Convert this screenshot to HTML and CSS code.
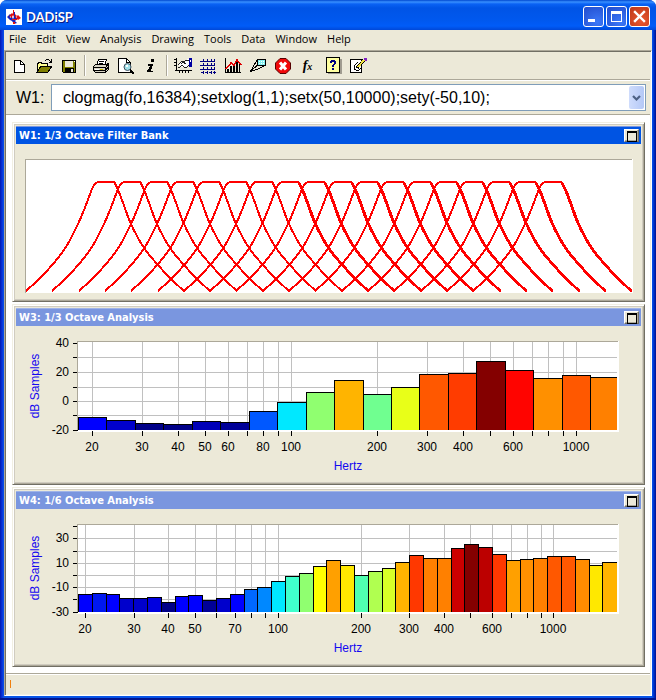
FILE: index.html
```html
<!DOCTYPE html>
<html lang="en">
<head>
<meta charset="utf-8">
<title>DADiSP</title>
<link rel="stylesheet" href="styles.css">
</head>
<body>
<div class="frame">
  <header class="titlebar">
    <svg class="logo" viewBox="0 0 16 16" aria-hidden="true">
      <rect width="16" height="16" fill="#fff"/>
      <path d="M1 8l3-3 2 2 2-2 4 4-3 3 2 2-3 1-2-3-2-1z" fill="#1420c0"/>
      <path d="M7 1h1v3l3 3 1-1 3 3-3 2-4-4-2 2-3-2 3-3 1 1z" fill="#e01010"/>
      <path d="M7 6l1 2-1 2-1-2zM10 7l1 1-1 1zM4 7l1 1-1 1z" fill="#fff"/>
      <path d="M8 3h1v10H8z" fill="#1420c0"/>
      <path d="M6 10h5v1H6zM7 13h2v2H7z" fill="#e01010"/>
    </svg>
    <h1 class="app-name">DADiSP</h1>
    <button class="win-btn" aria-label="Minimize"><svg viewBox="0 0 19 19"><path d="M4 12h7v3H4z" fill="#fff"/></svg></button>
    <button class="win-btn" aria-label="Maximize"><svg viewBox="0 0 19 19"><path d="M4 4h11v11H4zM5 7v7h9V7z" fill="#fff" fill-rule="evenodd"/></svg></button>
    <button class="win-btn win-close" aria-label="Close"><svg viewBox="0 0 19 19"><path d="M5 5l9 9M14 5l-9 9" stroke="#fff" stroke-width="2.4" stroke-linecap="square"/></svg></button>
  </header>

  <nav class="menu">
    <button>File</button><button>Edit</button><button>View</button><button>Analysis</button><button>Drawing</button><button>Tools</button><button>Data</button><button>Window</button><button>Help</button>
  </nav>

  <div class="client">
    <div class="toolbar">
      <button aria-label="New"><svg viewBox="0 0 18 18"><path d="M4.500 3.500h6l4 4v8h-10z" fill="#fff" stroke="#000"/><path d="M10.500 3.500v4h4" fill="none" stroke="#000"/></svg></button>
      <button aria-label="Open"><svg viewBox="0 0 18 18"><path d="M2 15V6h1V5h3v1h6v3" fill="#ffff90" stroke="#000"/><path d="M2 15l4-6h11l-4 6z" fill="#808000" stroke="#000"/><path d="M10 3.500h1M11 2.500h3M14 3.500h1M15 4.500h2M14 5.500h3M16.500 2v4" stroke="#000" fill="none"/></svg></button>
      <button aria-label="Save"><svg viewBox="0 0 18 18"><path d="M2.500 3.500h13v12H3.500l-1-1z" fill="#808000" stroke="#000"/><path d="M5 4h8v6H5z" fill="#ece9d8"/><path d="M5 11h9v5H5z"/><path d="M11 12h2v3h-2z" fill="#ece9d8"/><path d="M14 4h1v1h-1z" fill="#fff"/></svg></button>
      <span class="sep"></span>
      <button aria-label="Print"><svg viewBox="0 0 18 18"><path d="M6.500 2.500h8l-2 6h-8z" fill="#fff" stroke="#000"/><path d="M7 4.500h5M7 6.500h4" stroke="#000"/><path d="M1.500 9.500l2-2h11l2-1v6l-3 3h-10l-2-2z" fill="#d8d4c4" stroke="#000"/><path d="M2 10.500h11M2 13.500h11M13.500 10v5M14 9.500l2-2M14 12.500l2-2" stroke="#000"/><path d="M8 12h3" stroke="#d0c000"/><path d="M3 12h4" stroke="#fff"/></svg></button>
      <button aria-label="Print preview"><svg viewBox="0 0 18 18"><path d="M1.500 1.500h8l4 4v10h-12z" fill="#fff" stroke="#000"/><path d="M9.500 1.500v4h4" fill="none" stroke="#000"/><circle cx="10.500" cy="10" r="3.500" fill="#a0e0e8" stroke="#405060" shape-rendering="auto"/><path d="M9 8h2v2H9z" fill="#fff"/><path d="M13 13l4 3.500" stroke="#000" stroke-width="2"/></svg></button>
      <button aria-label="Information"><svg viewBox="0 0 18 18"><path d="M9 2h3v3H9zM6 7h5v1l-2 6h2v1H5v-2h1l2-4H6z"/></svg></button>
      <span class="sep"></span>
      <button aria-label="Plot"><svg viewBox="0 0 18 18"><path d="M2.500 1v12M1 13.500h17M0 2.500h3M0 5.500h3M0 8.500h3M5.500 13v3M8.500 13v3M11.500 13v3M14.500 13v3" stroke="#000"/><path d="M5 7l3-3h3l2-2h2v6l-3 2H6z" fill="#fff"/><path d="M4 8l4-4h3l2-1h2M4 10h2l2-2 2 2h3l2-2M7 7l2-2 3 2" fill="none" stroke="#222"/><path d="M15 1h3v9h-3z" fill="#0000a0"/><path d="M16 3h1v2h-1z" fill="#fff"/></svg></button>
      <button aria-label="Grid"><svg viewBox="0 0 18 18"><path d="M4.500 2v15M8.500 2v15M12.500 2v15M1 4.500h16M1 8.500h16M1 12.500h16M15.500 2v15M2 15.500h15" stroke="#000080" stroke-dasharray="3 1"/></svg></button>
      <button aria-label="Chart"><svg viewBox="0 0 18 18"><path d="M1.500 1v14.500H17" fill="none" stroke="#000"/><path d="M3 12h2v3H3zM6 9h2v6H6zM9 8h2v7H9zM12 5h2v10h-2zM15 7h1v8h-1z"/><path d="M2 12l5-6 3 2 3-5 4 5" fill="none" stroke="#e00000" stroke-width="1.500"/></svg></button>
      <button aria-label="Annotate"><svg viewBox="0 0 18 18"><path d="M8.500 2.500h8v6h-8z" fill="#80f0f0" stroke="#000"/><path d="M10 4h1M12 4h1M14 4h1M10 6h1M12 6h1M14 6h1" stroke="#fff"/><path d="M8 3L1.500 14.500L8 8.500M1.500 14.500L9 12L15 9" stroke="#000" fill="none"/></svg></button>
      <button aria-label="Stop"><svg viewBox="0 0 18 18"><path d="M6 1.500h6L16.500 6v6L12 16.500H6L1.500 12V6z" fill="#f00808" stroke="#500" shape-rendering="auto"/><path d="M6 5.500l6 7M12 5.500l-6 7" stroke="#fff" stroke-width="3" shape-rendering="auto"/></svg></button>
      <button aria-label="Function" class="fx"><i>f</i><small>x</small></button>
      <button aria-label="Help"><svg viewBox="0 0 18 18"><path d="M4 2h14v15H4z" fill="#a09c90"/><path d="M2.500 .500h13v15h-13z" fill="#ffffa0" stroke="#000"/><path d="M6 6V4h1V3h4v1h1v3h-1v1h-1v2H8V8h1V7h1V5H8v1zM8 11h2v2H8z" fill="#000080"/></svg></button>
      <button aria-label="Edit notes"><svg viewBox="0 0 18 18"><path d="M1.500 2.500h11v13h-11z" fill="#fff" stroke="#000"/><path d="M9 5L5 9v3l2 1h3l2-2" fill="none" stroke="#000"/><path d="M8 11l7-8" stroke="#000" stroke-width="3"/><path d="M9 10l6-7" stroke="#f0e040" stroke-width="2"/><path d="M15 1h3v3h-2z" fill="#8020c0"/></svg></button>
    </div>

    <div class="command">
      <label for="formula">W1:</label>
      <div class="combo">
        <input id="formula" type="text" value="clogmag(fo,16384);setxlog(1,1);setx(50,10000);sety(-50,10);">
        <button aria-label="Show history"><svg viewBox="0 0 15 23"><path d="M4 10l3.500 3.500L11 10" fill="none" stroke="#4d6185" stroke-width="2.200"/></svg></button>
      </div>
    </div>

    <main class="workspace">
      <section class="sheet active">
        <header class="caption"><h2>W1: 1/3 Octave Filter Bank</h2><button aria-label="Maximize W1"></button></header>
        <svg class="chart" id="filter-bank" viewBox="0 0 625 154" role="img" aria-label="Filter bank"></svg>
      </section>
      <section class="sheet">
        <header class="caption"><h2>W3: 1/3 Octave Analysis</h2><button aria-label="Maximize W3"></button></header>
        <svg class="chart" id="third-octave" viewBox="0 0 625 155" role="img" aria-label="Third octave analysis"></svg>
      </section>
      <section class="sheet">
        <header class="caption"><h2>W4: 1/6 Octave Analysis</h2><button aria-label="Maximize W4"></button></header>
        <svg class="chart" id="sixth-octave" viewBox="0 0 625 154" role="img" aria-label="Sixth octave analysis"></svg>
      </section>
    </main>

    <footer class="status"><span class="caret"></span></footer>
  </div>
</div>
<script src="charts.js"></script>
</body>
</html>
```
FILE: styles.css
```css
* { box-sizing: border-box; }

body {
  margin: 0;
  background: #fff;
  font-family: "Open Sans", "Liberation Sans", sans-serif;
  font-size: 11px;
  color: #000;
}

button {
  margin: 0;
  padding: 0;
  border: 0;
  background: none;
  font: inherit;
  color: inherit;
}

.frame {
  display: flex;
  flex-direction: column;
  min-height: 100vh;
  padding: 0 4px 4px;
  border-radius: 7px 7px 0 0;
  background: linear-gradient(90deg, #0019b0 0, #0831d9 2px, #0855e8 4px, #0855e8 calc(100% - 4px), #0040e0 calc(100% - 3px), #001090 100%);
  box-shadow: inset 0 -2px #001590;
  overflow: hidden;
}

.titlebar {
  display: flex;
  align-items: center;
  gap: 2px;
  height: 30px;
  margin: 0 -4px;
  padding: 3px 6px 0 6px;
  background: linear-gradient(#0048d0 0, #3890ff 2px, #0a62f4 4px, #0054e6 8px, #0058ee 20px, #005cf8 26px, #0048d8 30px);
}

.logo { width: 16px; height: 16px; }

.app-name {
  flex: 1;
  margin: 0 0 0 2px;
  font-family: Lato, sans-serif;
  font-size: 13px;
  line-height: 16px;
  color: #fff;
  text-shadow: 1px 1px #0a1883;
}

.win-btn {
  width: 21px;
  height: 21px;
  border: 1px solid #fff;
  border-radius: 3px;
  background: radial-gradient(circle at 70% 80%, #3c78f8, #2450d0 90%);
}
.win-btn svg { display: block; width: 19px; height: 19px; }
.win-close { background: radial-gradient(circle at 60% 70%, #e85830, #c03818 95%); }

.menu {
  display: flex;
  height: 20px;
  padding: 0 0 2px;
  background: #ece9d8;
  line-height: 18px;
}
.menu button { padding: 0 5px; }

.client {
  flex: 1;
  display: flex;
  flex-direction: column;
  border: 1px solid;
  border-color: #aca899 #fff #fff #aca899;
  box-shadow: inset 1px 1px #716f64, inset -1px -1px #f1efe2;
  padding: 1px;
  background: #ece9d8;
}

.toolbar {
  display: flex;
  align-items: center;
  height: 28px;
  border-bottom: 1px solid #aca899;
}
.toolbar button {
  display: flex;
  align-items: center;
  justify-content: center;
  width: 25px;
  height: 24px;
}
.toolbar svg { width: 18px; height: 18px; shape-rendering: crispEdges; }
.sep {
  width: 2px;
  height: 21px;
  margin: 0 2px 0 3px;
  border-left: 1px solid #aca899;
  border-right: 1px solid #fff;
}
.toolbar .fx {
  font-family: "Liberation Serif", serif;
  font-weight: bold;
  font-size: 14px;
  line-height: 16px;
}
.fx small { font-size: 10px; font-style: italic; padding-top: 3px; }

.command {
  display: flex;
  align-items: center;
  gap: 5px;
  height: 35px;
  padding: 0 4px 0 10px;
  border-top: 1px solid #fff;
  border-bottom: 1px solid #aca899;
  font-family: "Liberation Sans", sans-serif;
  font-size: 16px;
}
.command label { width: 30px; }
.combo {
  flex: 1;
  display: flex;
  min-width: 0;
  height: 27px;
  padding: 1px;
  border: 1px solid #7f9db9;
  background: #fff;
}
.combo input {
  flex: 1;
  min-width: 0;
  padding: 0 10px;
  border: 0;
  outline: 0;
  background: none;
  font: inherit;
}
.combo button {
  width: 15px;
  height: 23px;
  border-radius: 2px;
  background: linear-gradient(90deg, #cfdcfc, #b4c8f6);
}
.combo svg { display: block; }

.workspace {
  flex: 1;
  display: flex;
  flex-direction: column;
  gap: 2px;
  padding: 7px 5px 6px 6px;
  background: #fff;
}

.sheet {
  padding: 3px;
  border: 1px solid;
  border-color: #f1efe2 #716f64 #716f64 #f1efe2;
  background: #ece9d8;
  box-shadow: inset 1px 1px #fff, inset -1px -1px #aca899, inset 2px 2px #d0ccc0, inset -2px -2px #d0ccc0;
}
.caption {
  display: flex;
  align-items: flex-start;
  justify-content: space-between;
  height: 18px;
  padding: 2px 2px 0 3px;
  background: #7a96df;
  border-top: 1px solid #a0b4e8;
  color: #fff;
}
.active .caption { background: #0054e3; border-color: #7a96df; }
.caption h2 {
  margin: 0;
  font-family: "DejaVu Sans Condensed", "Open Sans", sans-serif;
  font-size: 11px;
  line-height: 14px;
  font-weight: bold;
}
.caption button {
  display: flex;
  align-items: flex-start;
  width: 15px;
  height: 13px;
  border: 1px solid;
  border-color: #fff #716f64 #716f64 #fff;
  background: #ece9d8;
  box-shadow: inset -1px -1px #aca899;
}
.caption button::before {
  content: "";
  width: 8px;
  height: 8px;
  margin: 1px 0 0 2px;
  border: 1px solid #000;
  border-top-width: 2px;
}

.chart {
  display: block;
  width: 100%;
  height: auto;
  font-family: "Liberation Sans", sans-serif;
  font-size: 12px;
}
.chart .plot { fill: #fff; }
.chart .edge { stroke: #aca899; fill: none; }
.chart .grid { stroke: #c0c0c0; fill: none; }
.chart .tick { stroke: #000; fill: none; }
.chart .bar { stroke: #000; }
.chart .response { stroke: #f00; stroke-width: 2; fill: none; }
.chart .axis { fill: #1408f0; }
.chart .plot, .chart .edge, .chart .grid, .chart .tick, .chart .bar, .chart .response { shape-rendering: crispEdges; }

.status {
  display: flex;
  align-items: center;
  height: 21px;
  padding-left: 4px;
  border-top: 1px solid #aca899;
  box-shadow: inset 0 1px #fff;
}
.caret { width: 1px; height: 8px; background: #f08010; }
```
FILE: charts.js
```js
const NS = "http://www.w3.org/2000/svg";

function add(svg, name, attrs, text) {
  const el = document.createElementNS(NS, name);
  for (const key in attrs) el.setAttribute(key, attrs[key]);
  if (text !== undefined) el.textContent = text;
  svg.appendChild(el);
}

function line(svg, cls, x1, y1, x2, y2) {
  add(svg, "path", { class: cls, d: `M${x1} ${y1}L${x2} ${y2}` });
}

// Catmull-Rom spline through the points, written as cubic segments.
function spline(p) {
  let d = `M${p[0]}`;
  for (let i = 0; i < p.length - 1; i++) {
    const a = p[i - 1] || p[i], b = p[i], c = p[i + 1], e = p[i + 2] || c;
    d += `C${b[0] + (c[0] - a[0]) / 6},${b[1] + (c[1] - a[1]) / 6} ` +
      `${c[0] - (e[0] - b[0]) / 6},${c[1] - (e[1] - b[1]) / 6} ${c[0]},${c[1]}`;
  }
  return d;
}

function drawFilterBank() {
  const svg = document.getElementById("filter-bank");
  add(svg, "rect", { class: "plot", x: 9, y: 15, width: 608, height: 134 });
  add(svg, "path", { class: "edge", d: "M9.5 149V15.5H616" });
  const shape = [[10, 147], [23, 135], [37, 120], [50, 103], [62, 80], [70, 61], [76, 45], [80, 39], [84, 38],
    [95, 38], [98, 38], [102, 46], [106, 56], [115, 80], [128, 104], [142, 121], [155, 135], [168, 147]];
  for (let i = 0; i < 18; i++) {
    const shift = Math.round(i * 26.3);
    add(svg, "path", { class: "response", d: spline(shape.map(([x, y]) => [x + shift, y])) });
    // The falling edges of the upper bands are drawn one pixel heavier.
    if (i > 6) add(svg, "path", { class: "response", d: spline(shape.slice(10).map(([x, y]) => [x + shift + 1, y])) });
  }
}

const FREQUENCIES = [20, 30, 40, 50, 60, 70, 80, 90, 100, 200, 300, 400, 500, 600, 700, 800, 900, 1000];

function drawSpectrum(o) {
  const svg = document.getElementById(o.id);
  add(svg, "rect", { class: "plot", x: 61, y: o.top, width: 542, height: o.base + 2 - o.top });
  const at = f => Math.round(o.x20 + o.decade * Math.log10(f / 20));
  o.rows.forEach(([y, label, grid]) => {
    if (grid) line(svg, "grid", 62, y + 0.5, 601, y + 0.5);
    line(svg, "tick", 57, y + 0.5, 62, y + 0.5);
    if (label) add(svg, "text", { x: 53, y: y + 4, "text-anchor": "end" }, label);
  });
  FREQUENCIES.forEach(f => {
    const x = at(f);
    line(svg, "grid", x + 0.5, o.top, x + 0.5, o.base);
    line(svg, "tick", x + 0.5, o.base + 1, x + 0.5, o.base + 6);
    if (o.labels.includes(f)) add(svg, "text", { x, y: o.base + 21, "text-anchor": "middle" }, f);
  });
  add(svg, "path", { class: "edge", d: `M61.5 ${o.base}V${o.top + 0.5}H602` });
  o.bars.forEach(([y, fill], i) => {
    const x = Math.round(62 + i * o.step);
    const last = i === o.bars.length - 1;
    const end = last ? 601 : Math.round(62 + (i + 1) * o.step);
    add(svg, "rect", { x, y, width: end - x, height: o.base - y, fill });
    const d = `M${x + 0.5} ${o.base}V${y + 0.5}H${last ? end : end + 0.5}` + (last ? "" : `V${o.base}`);
    add(svg, "path", { class: "bar", fill: "none", d });
  });
  add(svg, "text", { class: "axis", x: 332, y: o.base + 40, "text-anchor": "middle" }, "Hertz");
  add(svg, "text", { class: "axis", "text-anchor": "middle", transform: `translate(23 ${o.middle}) rotate(-90)` }, "dB Samples");
}

drawFilterBank();

drawSpectrum({
  id: "third-octave", top: 15, base: 104, middle: 60, x20: 76, decade: 284.8, step: 28.45,
  rows: [[17, "40"], [31, "", 1], [46, "20", 1], [61, "", 1], [75, "0", 1], [89, "", 1], [104, "-20"]],
  labels: [20, 30, 40, 50, 60, 80, 100, 200, 300, 400, 600, 1000],
  bars: [[91, "#0000ff"], [94, "#0000cc"], [97, "#000088"], [98, "#000088"], [95, "#0000b8"], [96, "#000098"],
    [85, "#0058ff"], [76, "#00e8ff"], [66, "#90ff70"], [54, "#ffb400"], [68, "#70ff90"], [61, "#e8ff18"],
    [48, "#ff5800"], [47, "#ff3c00"], [35, "#840000"], [44, "#ff0400"], [52, "#ff9000"], [49, "#ff5800"], [51, "#ff8000"]]
});

drawSpectrum({
  id: "sixth-octave", top: 15, base: 103, middle: 59, x20: 69, decade: 275.6, step: 13.8,
  rows: [[17, ""], [29, "30", 1], [42, "", 1], [54, "10", 1], [66, "", 1], [78, "-10", 1], [90, "", 1], [103, "-30"]],
  labels: [20, 30, 40, 50, 70, 100, 200, 300, 400, 600, 1000],
  bars: [[85, "#0000ff"], [84, "#0018f0"], [85, "#0000ff"], [89, "#0000cc"], [89, "#0000cc"], [88, "#0000e0"],
    [93, "#000088"], [87, "#0000ff"], [86, "#0000ff"], [91, "#000098"], [89, "#0000cc"], [85, "#0000ff"],
    [80, "#0068ff"], [78, "#0088ff"], [72, "#00e8ff"], [67, "#40ffcc"], [64, "#90ff70"], [57, "#ffff00"],
    [51, "#ffa000"], [56, "#ffe800"], [66, "#50ffb0"], [62, "#b0ff50"], [59, "#d8ff28"], [53, "#ffb400"],
    [46, "#ff3800"], [49, "#ff8000"], [49, "#ff8000"], [39, "#cc0000"], [35, "#840000"], [38, "#bc0000"],
    [45, "#ff3800"], [51, "#ffa000"], [50, "#ff9000"], [49, "#ff8000"], [47, "#ff5800"], [47, "#ff5800"],
    [50, "#ff8c00"], [56, "#ffe800"], [53, "#ffb400"]]
});
```
